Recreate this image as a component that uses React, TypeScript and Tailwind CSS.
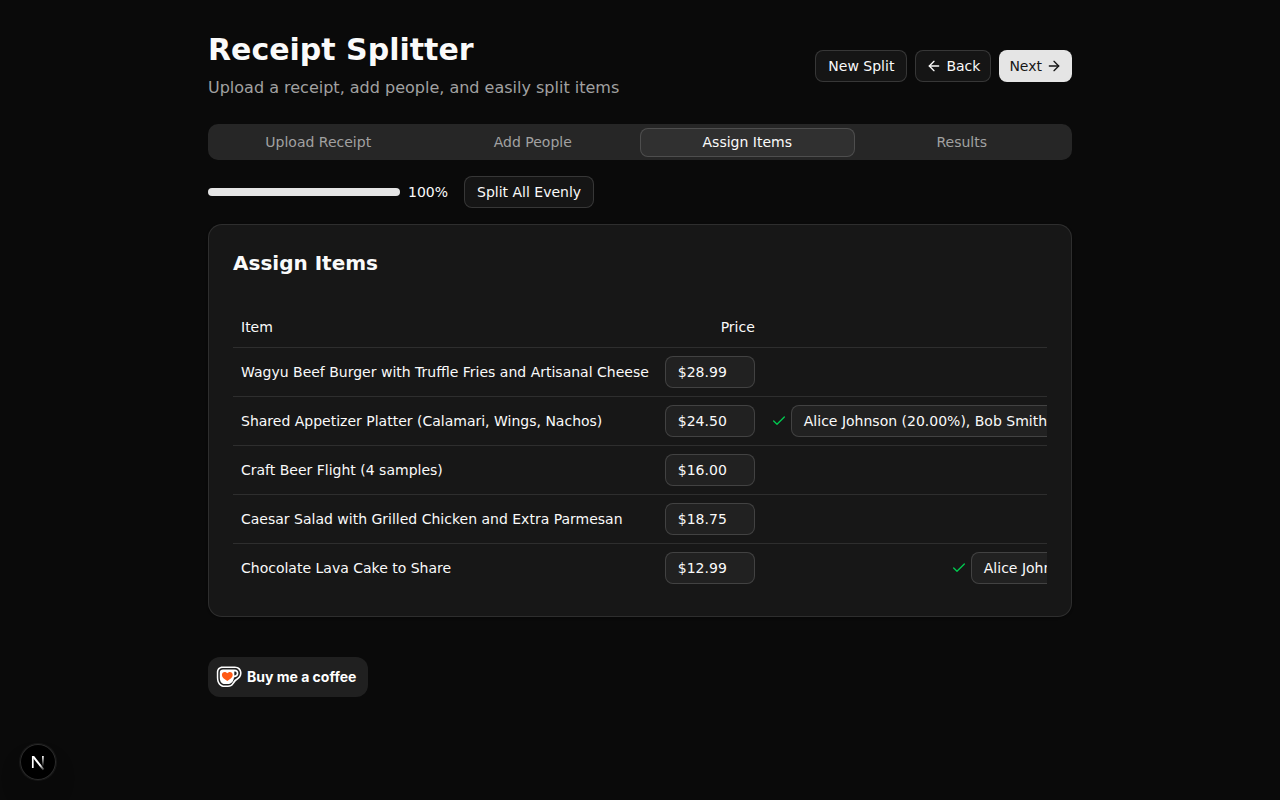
import { ArrowLeft, ArrowRight, Check } from "lucide-react";

const tabs = ["Upload Receipt", "Add People", "Assign Items", "Results"];

type Item = {
  name: string;
  price: string;
  assignees?: string;
  triggerWidth?: string;
};

const items: Item[] = [
  { name: "Wagyu Beef Burger with Truffle Fries and Artisanal Cheese", price: "$28.99" },
  {
    name: "Shared Appetizer Platter (Calamari, Wings, Nachos)",
    price: "$24.50",
    assignees: "Alice Johnson (20.00%), Bob Smith",
    triggerWidth: "w-[600px]",
  },
  { name: "Craft Beer Flight (4 samples)", price: "$16.00" },
  { name: "Caesar Salad with Grilled Chicken and Extra Parmesan", price: "$18.75" },
  {
    name: "Chocolate Lava Cake to Share",
    price: "$12.99",
    assignees: "Alice Johnson",
    triggerWidth: "w-[420px]",
  },
];

const outline =
  "inline-flex h-8 items-center gap-1 rounded-lg border border-white/15 bg-[#151515] text-sm font-medium whitespace-nowrap";

function Header() {
  return (
    <header className="flex flex-wrap items-center justify-between gap-4">
      <div>
        <h1 className="text-3xl font-bold">Receipt Splitter</h1>
        <p className="mt-2 text-base text-[#a1a1a1]">
          Upload a receipt, add people, and easily split items
        </p>
      </div>
      <div className="flex gap-2">
        <button className={`${outline} px-3`}>New Split</button>
        <button className={`${outline} px-2.5`}>
          <ArrowLeft className="size-4" />
          Back
        </button>
        <button className="inline-flex h-8 items-center gap-1 rounded-lg bg-[#e5e5e5] px-2.5 text-sm font-medium text-[#171717]">
          Next
          <ArrowRight className="size-4" />
        </button>
      </div>
    </header>
  );
}

function Tabs({ active }: { active: string }) {
  return (
    <div role="tablist" className="mt-6 grid h-9 grid-cols-4 items-center rounded-[10px] bg-[#262626] p-[3px]">
      {tabs.map((tab) => (
        <button
          key={tab}
          role="tab"
          aria-selected={tab === active}
          className={
            tab === active
              ? "h-[29px] rounded-lg border border-white/15 bg-[#303030] text-sm font-medium"
              : "h-[29px] rounded-lg border border-transparent text-sm font-medium text-[#a1a1a1]"
          }
        >
          {tab}
        </button>
      ))}
    </div>
  );
}

function ItemsTable() {
  return (
    <div className="mt-[30px] overflow-x-auto [scrollbar-width:none]">
      <table className="w-full text-sm whitespace-nowrap">
        <thead>
          <tr className="border-b border-white/10">
            <th scope="col" className="h-10 px-2 text-left font-medium">
              Item
            </th>
            <th scope="col" className="h-10 px-2 text-right font-medium">
              Price
            </th>
            <td />
          </tr>
        </thead>
        <tbody>
          {items.map((item) => (
            <tr key={item.name} className="border-b border-white/10 last:border-0">
              <td className="p-2">{item.name}</td>
              <td className="p-2">
                <input
                  type="text"
                  aria-label={`Price of ${item.name}`}
                  defaultValue={item.price}
                  className="block h-8 w-[90px] rounded-lg border border-white/15 bg-[#212121] px-3"
                />
              </td>
              <td className="p-2">
                {item.assignees && (
                  <div className="flex items-center justify-end gap-1">
                    <Check className="size-4 text-[#00c950]" />
                    <button
                      className={`${item.triggerWidth} h-8 rounded-lg border border-white/15 bg-[#212121] px-3 text-left font-medium`}
                    >
                      {item.assignees}
                    </button>
                  </div>
                )}
              </td>
            </tr>
          ))}
        </tbody>
      </table>
    </div>
  );
}

function CupIcon() {
  return (
    <svg viewBox="0 0 26 22" className="h-[22px] w-[26px]" aria-hidden="true">
      <path
        d="M6.5 0.6H18.8C22.9 0.6 25.6 3.4 25.6 7.1C25.6 10.3 23.7 12.7 21 14.2C19.4 15.2 18.9 16.3 17.6 18C16 20.2 14.6 21 12 21H8.6C3.8 21 0.8 17.2 0.8 11.4V6.4C0.8 2.8 3 0.6 6.5 0.6Z"
        fill="#fff"
      />
      <path
        d="M6.8 2.1H18.6C21.9 2.1 24 4.2 24 7.1C24 9.8 22.3 11.8 19.8 13C18.1 13.9 17.6 15.3 16.4 17C15.2 18.8 14 19.5 11.9 19.5H8.8C4.8 19.5 2.3 16.4 2.3 11.4V6.5C2.3 3.7 3.9 2.1 6.8 2.1Z"
        fill="#202020"
      />
      <path
        d="M7 3.6H18.4C20.9 3.6 22.4 5 22.4 7.2C22.4 9.6 20.7 11.2 18 11.5C17.3 15.8 15.4 18 11.9 18H9C5.8 18 3.8 15.6 3.8 11.4V6.7C3.8 4.7 4.9 3.6 7 3.6ZM18.3 5.5V9.4C19.9 9.3 20.7 8.6 20.7 7.3C20.7 6.1 19.9 5.5 18.3 5.5Z"
        fill="#fff"
        fillRule="evenodd"
      />
      <path
        d="M11.3 14.9C8.3 12.9 5.9 11.3 5.9 8.9C5.9 7.2 7.1 6 8.7 6C9.8 6 10.7 6.6 11.3 7.3C11.9 6.6 12.8 6 13.9 6C15.5 6 16.7 7.2 16.7 8.9C16.7 11.3 14.3 12.9 11.3 14.9Z"
        fill="#ff5a16"
      />
    </svg>
  );
}

function DevBadge() {
  return (
    <button
      aria-label="Open developer tools"
      className="fixed bottom-5 left-5 flex size-9 items-center justify-center rounded-full bg-black shadow-[0_0_0_1px_#171717,inset_0_0_0_1px_#2b2b2b,0_16px_32px_-8px_rgba(0,0,0,0.24)]"
    >
      <svg viewBox="0 0 36 36" className="size-9" fill="none" aria-hidden="true">
        <defs>
          <linearGradient id="stem" x1="23" y1="12" x2="23" y2="22.5" gradientUnits="userSpaceOnUse">
            <stop stopColor="#fff" />
            <stop offset="1" stopColor="#fff" stopOpacity="0" />
          </linearGradient>
          <linearGradient id="stroke" x1="20" y1="21" x2="24.5" y2="27" gradientUnits="userSpaceOnUse">
            <stop stopColor="#fff" />
            <stop offset="1" stopColor="#fff" stopOpacity="0" />
          </linearGradient>
        </defs>
        <path d="M12.8 24V12" stroke="#fff" strokeWidth="1.7" />
        <path d="M12 12H14.1L24.3 25L22.8 26.2L12 12.8Z" fill="url(#stroke)" />
        <path d="M22.9 12V22.5" stroke="url(#stem)" strokeWidth="1.7" />
      </svg>
    </button>
  );
}

export default function App() {
  return (
    <div className="min-h-screen bg-[#0a0a0a] font-['DejaVu_Sans',sans-serif] text-[#fafafa]">
      <main className="mx-auto max-w-4xl px-4 py-8">
        <Header />
        <Tabs active="Assign Items" />

        <div className="mt-4 flex items-center gap-4">
          <div className="flex items-center gap-2">
            <div
              role="progressbar"
              aria-label="Items assigned"
              aria-valuenow={100}
              className="h-2 w-48 overflow-hidden rounded-full bg-[#262626]"
            >
              <div className="h-full w-full bg-[#e5e5e5]" />
            </div>
            <span className="text-sm">100%</span>
          </div>
          <button className={`${outline} px-3`}>Split All Evenly</button>
        </div>

        <section className="mt-4 rounded-[14px] border border-white/10 bg-[#171717] p-6 shadow-sm">
          <h2 className="text-xl font-bold">Assign Items</h2>
          <ItemsTable />
        </section>

        <footer className="mt-10">
          <a
            href="#coffee"
            className="inline-flex h-10 w-40 items-center gap-[5px] rounded-xl bg-[#202020] pl-2 font-['Inter',sans-serif] text-sm font-bold whitespace-nowrap text-white"
          >
            <CupIcon />
            Buy me a coffee
          </a>
        </footer>
      </main>
      <DevBadge />
    </div>
  );
}
